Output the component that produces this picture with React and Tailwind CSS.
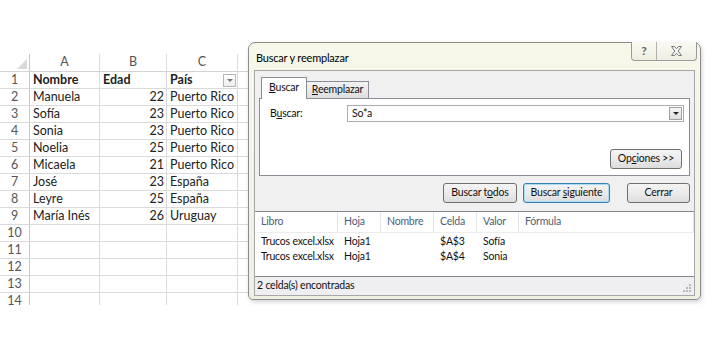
import React from "react";

const rows = [
  ["Nombre", "Edad", "País"],
  ["Manuela", "22", "Puerto Rico"],
  ["Sofía", "23", "Puerto Rico"],
  ["Sonia", "23", "Puerto Rico"],
  ["Noelia", "25", "Puerto Rico"],
  ["Micaela", "21", "Puerto Rico"],
  ["José", "23", "España"],
  ["Leyre", "25", "España"],
  ["María Inés", "26", "Uruguay"],
  ["", "", ""],
  ["", "", ""],
  ["", "", ""],
  ["", "", ""],
  ["", "", ""],
];

function Sheet() {
  return (
    <div className="w-[262px] h-[305px] overflow-hidden pt-[54px] font-['Lato',sans-serif] text-[12.5px] text-[#222]">
      <div className="flex h-[18px] border-b border-[#d4d4d4] text-[#555]">
        <div className="w-[30px] shrink-0 border-r border-[#c8c8c8] flex items-end justify-end pr-[2px] pb-[2px]">
          <div className="w-0 h-0 border-l-[10px] border-l-transparent border-b-[10px] border-b-[#d9d9d9]" />
        </div>
        <div className="w-[70px] shrink-0 border-r border-[#dcdcdc] flex items-center justify-center">A</div>
        <div className="w-[67px] shrink-0 border-r border-[#dcdcdc] flex items-center justify-center">B</div>
        <div className="w-[71px] shrink-0 border-r border-[#dcdcdc] flex items-center justify-center">C</div>
        <div className="flex-1" />
      </div>
      {rows.map((r, i) => (
        <div key={i} className="flex h-[17px] border-b border-[#dadada] leading-[16px] whitespace-nowrap">
          <div className="w-[30px] shrink-0 border-r border-[#c8c8c8] text-[#555] text-center">{i + 1}</div>
          <div className={"w-[70px] shrink-0 border-r border-[#dadada] pl-[3px] " + (i === 0 ? "font-bold" : "")}>{r[0]}</div>
          <div className={"w-[67px] shrink-0 border-r border-[#dadada] " + (i === 0 ? "font-bold pl-[3px]" : "text-right pr-[2px]")}>{r[1]}</div>
          <div className={"w-[71px] shrink-0 border-r border-[#dadada] pl-[3px] flex items-center justify-between " + (i === 0 ? "font-bold" : "")}>
            <span>{r[2]}</span>
            {i === 0 && (
              <span className="mr-[1px] w-[13px] h-[13px] border border-[#b5b5b5] bg-gradient-to-b from-white to-[#ececec] flex items-center justify-center">
                <span className="w-0 h-0 border-l-[3px] border-r-[3px] border-t-[3px] border-l-transparent border-r-transparent border-t-[#777]" />
              </span>
            )}
          </div>
          <div className="flex-1" />
        </div>
      ))}
    </div>
  );
}

function Btn({ children, className = "", focused = false }) {
  return (
    <div
      className={
        "h-[20px] rounded-[3px] border flex items-center justify-center bg-gradient-to-b from-[#f4f4f4] via-[#ebebeb] to-[#dcdcdc] " +
        (focused ? "border-[#3c7fb1] shadow-[inset_0_0_0_1px_#a8dcf5]" : "border-[#707070]") +
        " " +
        className
      }
    >
      {children}
    </div>
  );
}

function Dialog() {
  const cols = [
    ["Libro", "w-[83px]"],
    ["Hoja", "w-[43px]"],
    ["Nombre", "w-[53px]"],
    ["Celda", "w-[43px]"],
    ["Valor", "w-[42px]"],
    ["Fórmula", "flex-1"],
  ];
  const found = [
    ["Trucos excel.xlsx", "Hoja1", "", "$A$3", "Sofía", ""],
    ["Trucos excel.xlsx", "Hoja1", "", "$A$4", "Sonia", ""],
  ];
  return (
    <div className="absolute left-[248px] top-[42px] w-[453px] h-[258px] rounded-t-[7px] rounded-b-[5px] border border-[#8c8c8c] bg-gradient-to-b from-[#f7f8ea] via-[#f3f4e6] to-[#efefe2] shadow-[1px_2px_4px_rgba(0,0,0,0.18)] flex flex-col font-['Lato',sans-serif] text-[10.5px] tracking-[-0.2px] text-[#111] whitespace-nowrap">
      <div className="relative h-[27px] shrink-0 flex items-center pl-[7px] pt-[3px] text-[11px] text-black">
        Buscar y reemplazar
        <div className="absolute right-[3px] top-[-1px] h-[19px] flex rounded-b-[4px] border border-t-0 border-[#9a9a9a] bg-gradient-to-b from-[#fafaf2] to-[#eeeee2]">
          <div className="w-[25px] border-r border-[#b0b0b0] flex items-center justify-center text-[12px] text-[#666] font-bold">?</div>
          <div className="w-[39px] flex items-center justify-center">
            <svg width="11" height="10" viewBox="0 0 11 10">
              <path d="M0.5 0.5h3l2 2.2 2-2.2h3l-3.3 4.5 3.3 4.5h-3l-2-2.2-2 2.2h-3l3.3-4.5z" fill="#f4f4f4" stroke="#777" strokeWidth="1" strokeLinejoin="round" />
            </svg>
          </div>
        </div>
      </div>
      <div className="mx-[5px] h-[226px] border border-[#a6a6a6] bg-[#f0f0f0] flex flex-col">
        <div className="flex items-end h-[27px] pl-[5px] pt-[6px]">
          <div className="relative z-10 ml-[1px] h-[22px] -mb-px w-[46px] border border-b-0 border-[#898c95] bg-white flex items-center justify-center pb-[1px]">
            <span><u>B</u>uscar</span>
          </div>
          <div className="h-[17px] w-[62px] border border-l-0 border-b-0 border-[#898c95] bg-gradient-to-b from-[#f2f2f2] to-[#dedede] flex items-center justify-center">
            <span><u>R</u>eemplazar</span>
          </div>
        </div>
        <div className="mx-[4px] h-[78px] border border-[#898c95] bg-white flex flex-col pt-[6px] pl-[10px] pr-[5px]">
          <div className="flex items-center h-[17px]">
            <div className="w-[77px]">B<u>u</u>scar:</div>
            <div className="flex-1 h-[17px] border border-[#abadb3] flex items-center">
              <span className="flex-1 pl-[4px]">So*a</span>
              <div className="w-[13px] h-[13px] mr-[1px] border border-[#a0a0a0] bg-gradient-to-b from-[#f5f5f5] to-[#dedede] flex items-center justify-center">
                <span className="w-0 h-0 border-l-[3px] border-r-[3px] border-t-[3px] border-l-transparent border-r-transparent border-t-[#222]" />
              </div>
            </div>
          </div>
          <div className="flex justify-end mt-[27px] pr-[2px]">
            <Btn className="w-[72px]">
              <span>Op<u>c</u>iones &gt;&gt;</span>
            </Btn>
          </div>
        </div>
        <div className="flex justify-end pr-[4px] mt-[7px]">
          <Btn className="w-[74px]">
            <span>Buscar t<u>o</u>dos</span>
          </Btn>
          <Btn className="w-[87px] ml-[6px]" focused>
            <span>Buscar <u>s</u>iguiente</span>
          </Btn>
          <Btn className="w-[63px] ml-[17px]">
            <span>Cerrar</span>
          </Btn>
        </div>
        <div className="mt-[8px] h-[66px] border-t border-b border-[#828790] bg-white flex flex-col">
          <div className="flex h-[21px] text-[#4c607a] border-b border-[#ececec]">
            {cols.map(([c, w], i) => (
              <div key={i} className={w + " shrink-0 flex items-center pl-[6px] border-r border-[#e5e5e5]"}>
                {c}
              </div>
            ))}
          </div>
          {found.map((r, j) => (
            <div key={j} className={"flex h-[15px] items-center " + (j === 0 ? "mt-[1px]" : "")}>
              {r.map((v, i) => (
                <div key={i} className={cols[i][1] + " shrink-0 pl-[6px]"}>
                  {v}
                </div>
              ))}
            </div>
          ))}
        </div>
        <div className="flex-1 flex items-center pl-[2px] relative bg-[#efeef0]">
          2 celda(s) encontradas
          <svg className="absolute right-[2px] bottom-[2px]" width="10" height="10" viewBox="0 0 10 10">
            <g fill="#b8b8b8">
              <rect x="7" y="1" width="2" height="2" />
              <rect x="4" y="4" width="2" height="2" />
              <rect x="7" y="4" width="2" height="2" />
              <rect x="1" y="7" width="2" height="2" />
              <rect x="4" y="7" width="2" height="2" />
              <rect x="7" y="7" width="2" height="2" />
            </g>
          </svg>
        </div>
      </div>
    </div>
  );
}

export default function App() {
  return (
    <div className="relative w-[712px] h-[350px] bg-white overflow-hidden">
      <Sheet />
      <Dialog />
    </div>
  );
}
